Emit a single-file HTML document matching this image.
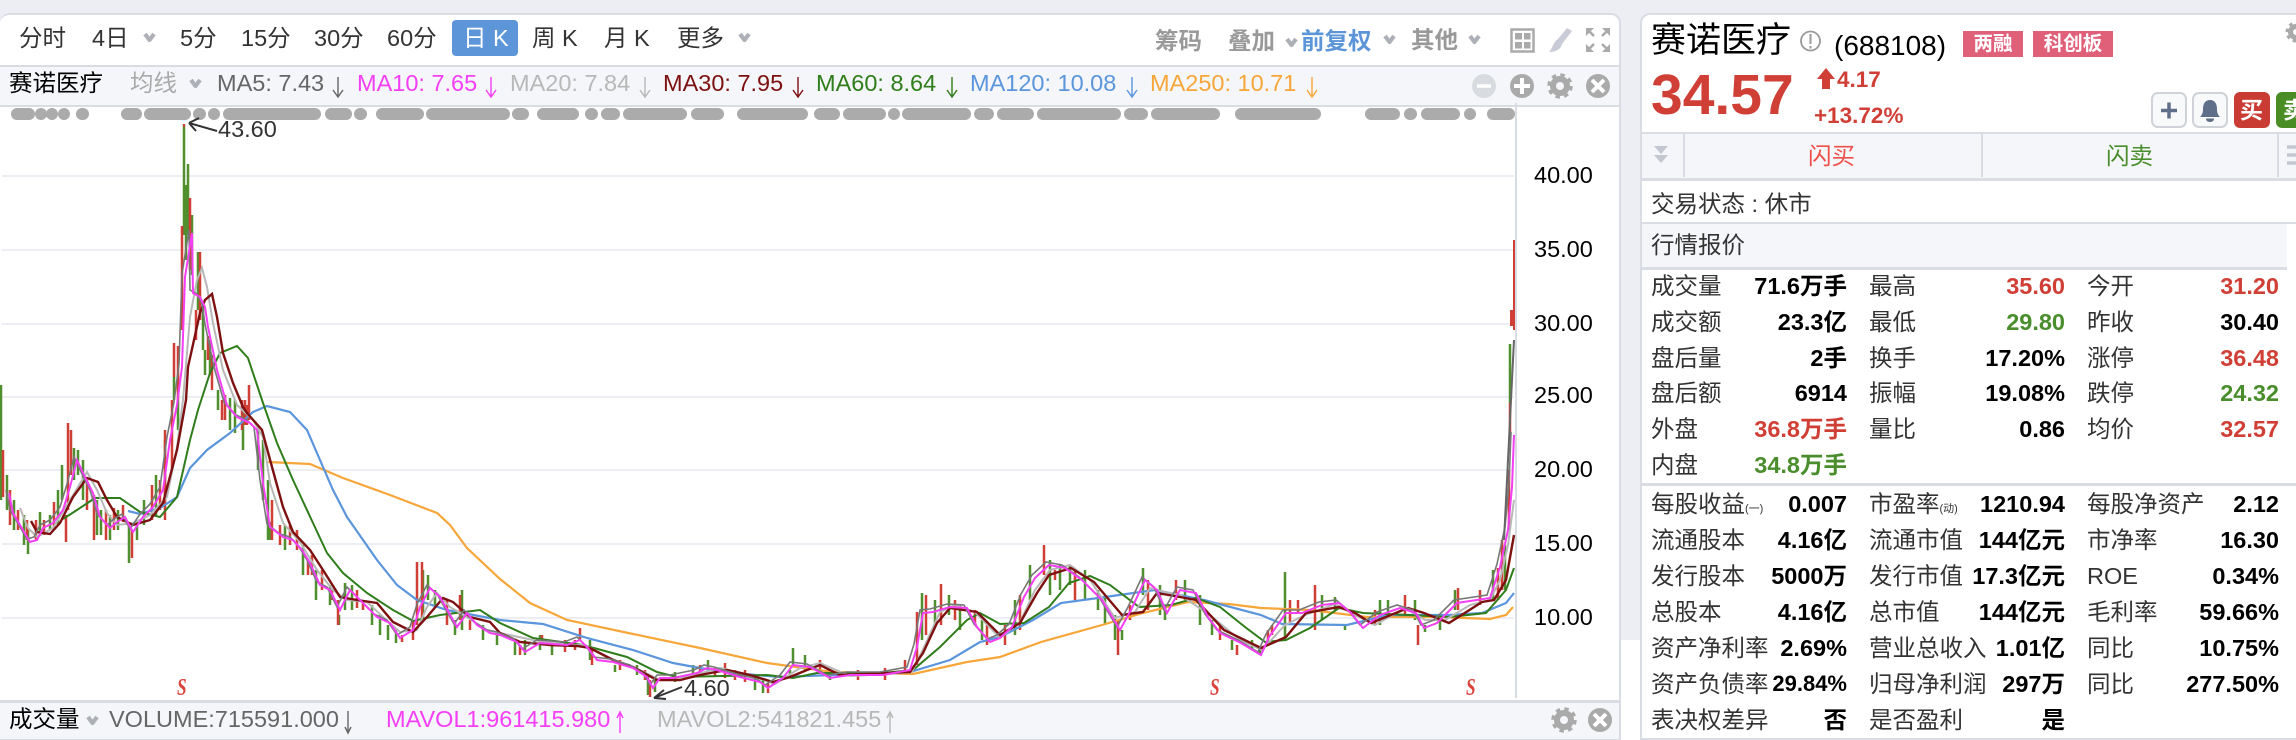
<!DOCTYPE html>
<html lang="zh"><head><meta charset="utf-8"><title>赛诺医疗</title>
<style>
html,body{margin:0;padding:0;background:#fff}
#p{position:relative;width:2296px;height:740px;overflow:hidden;background:#fff;font-family:"Liberation Sans","Noto Sans CJK SC",sans-serif;font-size:23.5px;color:#333}
.b{position:absolute}
.t{position:absolute;white-space:nowrap;height:36px;line-height:36px}
.r{text-align:right}
.v{font-weight:bold;color:#000;font-size:23.5px}
.red{color:#d03f36}.grn{color:#4a8d2c}
.l1{left:1651px}.l2{left:1869px}.l3{left:2087px}
.v1{right:449px}.v2{right:231px}.v3{right:17px}
svg{position:absolute;left:0;top:0}
</style></head><body><div id="p">
<!-- background -->
<div class="b" style="left:0;top:0;width:2296px;height:640px;background:#eceef3"></div>
<!-- left card -->
<div class="b" style="left:0;top:13px;width:1619px;height:725px;background:#fff;border:2px solid #d9dce3;border-left:0;border-bottom:0;border-radius:10px 10px 0 0"></div>
<div class="b" style="left:0;top:65px;width:1619px;height:38px;background:#f4f6f9;border-top:2px solid #d9dce3;border-bottom:2px solid #d9dce3"></div>
<div class="b" style="left:0;top:700px;width:1619px;height:36px;background:#f4f6f9;border-top:3px solid #d9dce3;border-bottom:2px solid #d9dce3"></div>
<!-- right card -->
<div class="b" style="left:1640px;top:13px;width:656px;height:727px;background:#fff;border-top:2px solid #d9dce3;border-left:2px solid #d9dce3;border-radius:10px 0 0 0;box-sizing:border-box"></div>
<div class="b" style="left:1642px;top:132px;width:654px;height:44px;background:#f4f6f9;border-top:2px solid #d9dce3;border-bottom:3px solid #d9dce3"></div>
<div class="b" style="left:1683px;top:134px;width:2px;height:43px;background:#d9dce3"></div>
<div class="b" style="left:1981px;top:134px;width:2px;height:43px;background:#d9dce3"></div>
<div class="b" style="left:2277px;top:134px;width:2px;height:43px;background:#d9dce3"></div>
<div class="b" style="left:1642px;top:222px;width:645px;height:43px;background:#f4f6f9;border-top:2px solid #d9dce3;border-bottom:3px solid #d9dce3"></div>
<div class="b" style="left:2287px;top:222px;width:9px;height:2px;background:#d9dce3"></div>
<div class="b" style="left:1642px;top:483px;width:654px;height:3px;background:#d9dce3"></div>
<div class="b" style="left:1642px;top:738px;width:654px;height:2px;background:#d9dce3"></div>
<div class="b" style="left:452px;top:20px;width:66px;height:36px;background:#5c95d8;border-radius:4px"></div>

<svg width="2296" height="740" viewBox="0 0 2296 740" fill="none">
<defs>
<polyline id="m10" points="9,493 13,513 20,525 30,542 37,540 43,528 53,523 63,510 70,487 77,460 85,477 93,493 100,517 110,528 117,522 125,517 133,532 143,517 153,507 163,490 170,440 177,405 182,367 185,277 192,233 193,293 200,297 205,307 208,327 217,370 227,405 237,417 250,423 257,430 263,483 270,527 283,537 293,540 302,550 310,563 320,585 330,590 340,610 350,590 363,603 377,617 390,623 400,638 413,630 420,607 430,588 440,597 457,627 467,613 477,625 490,633 500,635 517,642 525,652 540,643 567,645 580,640 588,648 597,660 613,662 633,668 647,677 653,688 660,678 673,678 697,673 707,668 717,670 740,677 760,682 768,688 783,678 793,665 810,667 830,678 850,675 883,675 910,670 917,647 923,613 933,612 950,607 967,608 977,627 990,642 1000,638 1012,627 1024,597 1035,578 1049,565 1065,568 1082,580 1102,600 1120,630 1131,610 1145,580 1157,590 1167,613 1180,590 1196,593 1208,617 1220,633 1241,643 1261,655 1269,637 1286,613 1302,613 1322,605 1339,603 1351,613 1363,628 1380,615 1400,608 1416,613 1424,628 1437,623 1457,603 1490,598 1500,567 1508,530 1512,487 1514,435"/>
</defs>
<!-- grid -->
<path stroke="#eceef3" stroke-width="2" d="M2 176H1514M2 250H1514M2 324H1514M2 397H1514M2 470H1514M2 544H1514M2 618H1514"/>
<path stroke="#d9dce3" stroke-width="2" d="M1516 103V698"/>
<!-- dots -->
<path stroke="#ababab" stroke-width="12" stroke-linecap="round" d="M17 114H29M41 114H41M52 114H52M64 114H64M82 114H83M127 114H136M150 114H185M199 114H200M214 114H214M229 114H315M331 114H346M360 114H361M382 114H418M432 114H504M518 114H523M543 114H573M591 114H592M607 114H614M629 114H681M697 114H718M743 114H802M820 114H834M849 114H880M894 114H894M908 114H965M980 114H988M1003 114H1028M1043 114H1115M1130 114H1142M1157 114H1214M1241 114H1315M1371 114H1394M1410 114H1411M1427 114H1454M1470 114H1470M1493 114H1509"/>
<!-- candles -->
<path stroke="#4f8f2e" stroke-width="2.5" d="M1 385V500M7 475V510M14 500V530M24 515V545M28 530V554M40 512V535M50 515V530M58 490V525M62 465V500M74 448V480M78 450V475M83 460V500M97 500V535M101 510V535M110 515V540M118 510V530M129 523V563M137 520V540M144 500V525M156 475V515M165 440V500M174 377V400M178 400V430M184 124V235M186 185V260M188 164V235M192 215V275M198 252V310M203 305V350M205 350V375M210 340V375M218 390V410M230 398V430M235 400V433M243 410V450M258 430V470M263 440V500M268 480V540M270 522V540M285 525V550M303 545V575M316 570V600M330 585V605M339 615V625M345 583V610M352 585V610M372 605V625M380 615V635M388 625V640M396 630V643M423 570V620M428 575V600M435 590V605M455 620V635M462 590V630M483 625V640M497 632V645M515 640V655M525 640V655M540 635V650M552 645V655M590 640V660M615 665V672M637 665V675M648 675V695M655 680V692M675 672V682M693 665V678M708 660V672M755 675V690M763 680V693M790 670V677M793 648V665M805 655V670M830 672V680M922 593V640M935 600V625M949 595V615M960 605V630M982 620V640M1015 600V635M1030 565V600M1050 560V595M1060 565V590M1070 565V585M1085 570V600M1098 590V610M1105 595V625M1115 615V640M1122 630V640M1143 568V595M1160 585V615M1165 610V620M1185 580V600M1200 595V625M1212 620V635M1232 640V650M1252 640V650M1260 650V655M1285 572V640M1322 595V620M1335 597V610M1345 625V630M1380 600V625M1388 600V615M1415 600V620M1425 625V632M1440 620V630M1455 590V610M1493 570V600M1505 545V590M1510 344V403"/>
<path stroke="#cf3f36" stroke-width="2.5" d="M3 450V497M10 490V525M18 510V530M27 520V540M36 520V540M44 520V535M54 502V530M66 515V542M68 423V510M71 430V475M87 480V510M94 495V540M106 510V540M114 508V530M123 505V522M132 530V558M152 485V520M160 480V510M165 430V520M172 400V470M174 343V377M178 346V400M182 226V330M190 198V270M196 310V340M200 252V320M208 336V360M212 355V390M222 400V420M225 395V420M242 400V430M245 400V425M247 405V425M249 385V420M272 500V540M280 525V545M290 525V545M297 530V550M308 560V575M312 555V575M322 570V590M332 590V600M338 600V625M357 590V608M363 600V610M402 635V642M413 620V640M417 562V625M422 562V620M447 600V625M460 595V620M470 620V630M520 645V655M542 635V645M565 640V652M575 640V650M580 628V640M592 650V665M620 660V670M645 670V680M650 680V697M700 665V676M715 668V676M725 663V678M735 670V680M745 670V682M768 683V693M820 660V672M858 670V680M885 668V680M905 660V672M917 612V665M926 595V635M941 584V625M955 600V620M975 610V625M987 625V645M1005 625V645M1020 595V630M1044 545V575M1055 570V580M1075 570V600M1118 620V655M1130 605V620M1148 580V610M1176 580V600M1220 625V640M1237 645V655M1268 630V640M1272 625V635M1290 600V625M1298 600V612M1315 585V630M1375 610V625M1405 595V615M1418 625V645M1458 588V610M1480 590V605M1498 568V600M1502 540V590M1509 470V530M1510 403V440"/>
<path stroke="#cf3f36" stroke-width="2" d="M1514 240V330"/><path stroke="#cf3f36" stroke-width="4" d="M1512 310V326"/><path stroke="#cf3f36" stroke-width="2" d="M184 124V127"/>
<!-- MAs -->
<polyline stroke="#f7a63a" stroke-width="2.2" points="268,462 310,464 343,478 390,495 437,513 450,525 467,548 500,579 530,603 567,620 633,634 700,648 767,663 833,672 913,674 967,662 1000,657 1041,642 1102,625 1143,613 1188,602 1229,604 1261,608 1310,610 1367,617 1441,617 1490,619 1506,615 1513,607"/>
<polyline stroke="#5b95dc" stroke-width="2.2" points="128,511 140,514 160,508 177,497 190,468 207,450 230,433 253,412 267,406 290,412 307,430 320,460 333,490 347,517 377,560 397,585 417,600 447,610 500,620 543,624 587,638 633,650 673,663 700,668 733,673 780,677 833,675 910,672 950,660 980,642 1000,637 1033,620 1061,603 1098,598 1155,590 1204,600 1261,615 1282,624 1347,625 1388,615 1449,615 1482,613 1506,603 1514,593"/>
<polyline stroke="#2f7d1b" stroke-width="2" points="63,519 77,510 95,498 120,498 140,512 160,517 177,497 190,440 198,410 210,373 220,353 237,346 248,358 263,403 277,443 293,480 313,523 327,553 343,573 367,593 393,610 413,621 440,615 480,610 500,623 533,638 583,645 627,657 657,672 677,677 767,675 793,678 817,673 883,673 913,670 940,647 967,620 980,613 1000,624 1024,623 1049,607 1069,583 1090,576 1110,585 1139,607 1171,605 1196,598 1220,607 1245,627 1265,642 1286,640 1310,628 1339,608 1363,613 1408,615 1449,617 1486,613 1506,590 1514,568"/>
<polyline stroke="#b8b8b8" stroke-width="2" points="20,508 28,528 37,537 53,528 70,500 87,472 97,490 107,513 117,525 133,523 150,515 167,497 177,447 183,400 190,317 197,280 202,268 207,287 213,323 223,370 237,405 253,420 263,437 270,483 283,523 300,542 317,570 333,590 347,600 367,602 383,617 400,632 417,630 427,607 437,593 450,607 467,617 487,630 500,633 533,640 567,645 585,645 610,658 640,670 660,680 690,676 720,668 750,675 775,684 800,668 820,663 850,676 890,674 912,672 925,645 940,612 955,605 975,612 1000,638 1020,622 1035,590 1050,570 1070,565 1090,580 1115,618 1135,612 1150,588 1165,592 1180,595 1210,615 1240,640 1262,650 1285,625 1305,615 1335,604 1355,615 1375,625 1405,608 1425,620 1445,620 1470,605 1490,600 1500,580 1508,545 1514,500"/>
<polyline stroke="#7d1010" stroke-width="2.4" points="31,521 37,532 50,534 60,523 73,497 87,478 98,482 107,500 117,517 133,525 150,520 163,503 177,450 186,400 188,367 200,313 205,300 212,294 217,317 223,353 233,383 243,407 247,413 262,430 272,467 283,507 293,532 310,550 323,570 340,597 357,600 377,603 393,622 413,632 427,617 443,598 453,602 470,617 490,622 500,633 520,642 550,645 577,646 590,648 613,660 633,667 657,680 680,680 700,675 727,670 750,675 773,682 790,677 807,670 820,665 840,675 867,674 910,672 923,653 937,623 950,608 977,612 1000,635 1020,623 1037,593 1049,575 1071,568 1094,582 1122,615 1143,612 1157,593 1180,597 1196,600 1224,630 1261,648 1286,637 1306,613 1339,607 1355,613 1371,623 1408,608 1424,613 1449,623 1482,602 1494,600 1506,580 1514,535"/>
<use href="#m10" stroke="#777" stroke-width="1.6" transform="translate(-3,-3)"/>
<polyline stroke="#666" stroke-width="2" points="1504,540 1509,440 1514,340"/>
<use href="#m10" stroke="#f43ff4" stroke-width="2"/>
<!-- hi lo arrows -->
<path stroke="#333" stroke-width="2" d="M189 123L217 131M189 123L199 118M189 123L196 131M654 698L682 687M654 698L664 690M654 698L666 699"/>
<!-- MA arrows -->
<g stroke-width="1.4">
<path stroke="#666" d="M338 77V96M333 90L338 97L343 90"/>
<path stroke="#f43ff4" d="M491 77V96M486 90L491 97L496 90"/>
<path stroke="#b8b8b8" d="M645 77V96M640 90L645 97L650 90"/>
<path stroke="#7d1010" d="M798 77V96M793 90L798 97L803 90"/>
<path stroke="#2f7d1b" d="M952 77V96M947 90L952 97L957 90"/>
<path stroke="#5b95dc" d="M1132 77V96M1127 90L1132 97L1137 90"/>
<path stroke="#f7a63a" d="M1312 77V96M1307 90L1312 97L1317 90"/>
<path stroke="#666" d="M348 711V732M345 727L348 733L351 727"/>
<path stroke="#f43ff4" d="M620 733V712M617 718L620 712L623 718"/>
<path stroke="#b8b8b8" d="M890 733V712M887 718L890 712L893 718"/>
</g>
<!-- chevrons -->
<g stroke="#adb0b6" stroke-width="4.2" stroke-linejoin="round">
<path d="M145 34L149.500 40L154 34"/><path d="M740 34L744.500 40L749 34"/><path d="M191 80L195.500 86L200 80"/>
<path d="M1287 39L1291.500 45L1296 39"/><path d="M1385 36L1389.500 42L1394 36"/><path d="M1470 36L1474.500 42L1479 36"/><path d="M88 717L92.500 723L97 717"/>
</g>
<!-- toolbar icons -->
<rect x="1511.500" y="29.500" width="22" height="22" stroke="#aaa" stroke-width="2.500"/>
<rect x="1515" y="33" width="7" height="6.500" fill="#aaa"/><rect x="1524" y="33" width="6.500" height="6.500" fill="#aaa"/><rect x="1515" y="42" width="7" height="6.500" fill="#aaa"/><rect x="1524" y="42" width="6.500" height="6.500" fill="#aaa"/>
<path fill="#c9cbd7" d="M1567 28L1572 31L1562 44C1561 49 1556 52 1549 52C1553 48 1553 42 1558 39Z"/>
<path stroke="#aaa" stroke-width="2.500" d="M1587 29L1594 36M1609 29L1602 36M1587 51L1594 44M1609 51L1602 44"/>
<path fill="#aaa" d="M1586 28H1594L1586 36ZM1610 28H1602L1610 36ZM1586 52H1594L1586 44ZM1610 52H1602L1610 44Z"/>
<!-- ma row icons -->
<circle cx="1484" cy="86" r="12" fill="#d8dbe0"/><path stroke="#fff" stroke-width="3.500" d="M1477 86H1491"/>
<circle cx="1522" cy="86" r="12" fill="#aaa"/><path stroke="#fff" stroke-width="4" d="M1514 86H1530M1522 78V94"/>
<circle cx="1560" cy="86" r="7" stroke="#aaa" stroke-width="6"/><circle cx="1560" cy="86" r="11" stroke="#aaa" stroke-width="3.500" stroke-dasharray="4.400 4.240"/>
<circle cx="1598" cy="86" r="12" fill="#aaa"/><path stroke="#fff" stroke-width="4" d="M1592 80L1604 92M1604 80L1592 92"/>
<!-- footer icons -->
<circle cx="1564" cy="720" r="7" stroke="#aaa" stroke-width="6"/><circle cx="1564" cy="720" r="11" stroke="#aaa" stroke-width="3.500" stroke-dasharray="4.400 4.240"/>
<circle cx="1600" cy="720" r="12" fill="#aaa"/><path stroke="#fff" stroke-width="4" d="M1594 714L1606 726M1606 714L1594 726"/>
<!-- right panel icons -->
<circle cx="1810.500" cy="41" r="9.500" stroke="#9a9a9a" stroke-width="1.800"/><path stroke="#9a9a9a" stroke-width="2" d="M1810.500 34V44M1810.500 46V48.500"/>
<path fill="#d03f36" d="M1826 68L1835 79H1830V89H1822V79H1817Z"/>
<rect x="2152" y="93" width="34" height="34" rx="6" fill="#f8f9fb" stroke="#cfd2d8" stroke-width="2"/>
<path stroke="#5f6f8a" stroke-width="3.500" d="M2161 110.500H2177M2169 102.500V118.500"/>
<rect x="2193" y="93" width="34" height="34" rx="6" fill="#f8f9fb" stroke="#cfd2d8" stroke-width="2"/>
<path fill="#5f6f8a" d="M2210 100C2215 100 2217 104 2217 109C2217 113 2218 115 2220 117H2200C2202 115 2203 113 2203 109C2203 104 2205 100 2210 100ZM2206 118.500H2214C2214 121 2212 122 2210 122C2208 122 2206 121 2206 118.500Z"/>
<rect x="2234" y="92" width="36" height="36" rx="6" fill="#c93c33"/>
<rect x="2276" y="92" width="36" height="36" rx="6" fill="#4a8d24"/>
<path fill="#c4c7d0" d="M1654 146H1668L1661 154ZM1654 155H1668L1661 163Z"/>
<path stroke="#c4c7d0" stroke-width="3.500" d="M2287 147H2296M2287 155H2296M2287 163H2296"/>
<circle cx="2296" cy="32" r="5.500" stroke="#aaa" stroke-width="5"/><circle cx="2296" cy="32" r="9" stroke="#aaa" stroke-width="3" stroke-dasharray="3.500 3.500"/>
<!-- S markers -->
<g fill="#d9443c" font-family="Liberation Serif,serif" font-size="24" font-style="italic" font-weight="bold">
<text transform="translate(177,695) scale(.72,1)">S</text>
<text transform="translate(1210,695) scale(.72,1)">S</text>
<text transform="translate(1466,695) scale(.72,1)">S</text>
</g>
</svg>

<!-- toolbar -->
<span class="t" style="left:19px;top:20px">分时</span><span class="t" style="left:92px;top:20px">4日</span>
<span class="t" style="left:180px;top:20px">5分</span><span class="t" style="left:241px;top:20px">15分</span>
<span class="t" style="left:314px;top:20px">30分</span><span class="t" style="left:387px;top:20px">60分</span>
<span class="t" style="left:463px;top:20px;color:#fff">日 K</span><span class="t" style="left:532px;top:20px">周 K</span>
<span class="t" style="left:604px;top:20px">月 K</span><span class="t" style="left:677px;top:20px">更多</span>
<span class="t" style="left:1155px;top:23px;color:#999;font-weight:bold">筹码</span><span class="t" style="left:1228px;top:23px;color:#999;font-weight:bold">叠加</span>
<span class="t" style="left:1301px;top:23px;color:#5c95d8;font-weight:bold">前复权</span><span class="t" style="left:1411px;top:22px;color:#999;font-weight:bold">其他</span>
<!-- ma row -->
<span class="t" style="left:9px;top:65px;color:#000">赛诺医疗</span><span class="t" style="left:130px;top:65px;color:#aaa">均线</span>
<span class="t" style="left:217px;top:65px;color:#666">MA5: 7.43</span>
<span class="t" style="left:357px;top:65px;color:#f43ff4">MA10: 7.65</span>
<span class="t" style="left:510px;top:65px;color:#b8b8b8">MA20: 7.84</span>
<span class="t" style="left:663px;top:65px;color:#7d1010">MA30: 7.95</span>
<span class="t" style="left:816px;top:65px;color:#2f7d1b">MA60: 8.64</span>
<span class="t" style="left:970px;top:65px;color:#5b95dc">MA120: 10.08</span>
<span class="t" style="left:1150px;top:65px;color:#f7a63a">MA250: 10.71</span>
<span class="t" style="left:218px;top:111px;color:#333">43.60</span><span class="t" style="left:684px;top:670px;color:#333">4.60</span>
<!-- axis -->
<span class="t" style="left:1534px;top:157px;color:#000">40.00</span><span class="t" style="left:1534px;top:231px;color:#000">35.00</span>
<span class="t" style="left:1534px;top:305px;color:#000">30.00</span><span class="t" style="left:1534px;top:377px;color:#000">25.00</span>
<span class="t" style="left:1534px;top:451px;color:#000">20.00</span><span class="t" style="left:1534px;top:525px;color:#000">15.00</span>
<span class="t" style="left:1534px;top:599px;color:#000">10.00</span>
<!-- footer -->
<span class="t" style="left:9px;top:701px;color:#000">成交量</span><span class="t" style="left:109px;top:701px;color:#666">VOLUME:715591.000</span>
<span class="t" style="left:386px;top:701px;color:#f43ff4">MAVOL1:961415.980</span><span class="t" style="left:657px;top:701px;color:#b8b8b8">MAVOL2:541821.455</span>
<!-- head -->
<span class="t" style="left:1651px;top:20px;font-size:35px;color:#000;height:42px;line-height:42px">赛诺医疗</span>
<span class="t" style="left:1834px;top:28px;font-size:28px;color:#000">(688108)</span>
<span class="b" style="left:1963px;top:31px;width:60px;height:26px;background:#e0607a;color:#fff;font-weight:bold;font-size:19.5px;line-height:26px;text-align:center">两融</span>
<span class="b" style="left:2033px;top:31px;width:80px;height:26px;background:#e0607a;color:#fff;font-weight:bold;font-size:19.5px;line-height:26px;text-align:center">科创板</span>
<span class="t red" style="left:1651px;top:62px;font-size:57px;font-weight:bold;height:66px;line-height:66px">34.57</span>
<span class="t red" style="left:1837px;top:62px;font-size:22.500px;font-weight:bold">4.17</span>
<span class="t red" style="left:1814px;top:98px;font-size:22.500px;font-weight:bold">+13.72%</span>
<span class="t" style="left:2240px;top:92px;color:#fff;font-weight:bold;font-size:23px">买</span>
<span class="t" style="left:2283px;top:92px;color:#fff;font-weight:bold;font-size:23px">卖</span>
<span class="t" style="left:1808px;top:138px;color:#ef4f4a">闪买</span><span class="t" style="left:2106px;top:138px;color:#4a8d2c">闪卖</span>
<span class="t l1" style="top:186px">交易状态 : 休市</span>
<span class="t l1" style="top:227px">行情报价</span>
<!-- rows A -->
<span class="t l1" style="top:268px">成交量</span><span class="t v r v1" style="top:268px">71.6万手</span><span class="t l2" style="top:268px">最高</span><span class="t v r v2" style="top:268px;color:#d03f36">35.60</span><span class="t l3" style="top:268px">今开</span><span class="t v r v3" style="top:268px;color:#d03f36">31.20</span>
<span class="t l1" style="top:304px">成交额</span><span class="t v r v1" style="top:304px">23.3亿</span><span class="t l2" style="top:304px">最低</span><span class="t v r v2" style="top:304px;color:#4a8d2c">29.80</span><span class="t l3" style="top:304px">昨收</span><span class="t v r v3" style="top:304px">30.40</span>
<span class="t l1" style="top:340px">盘后量</span><span class="t v r v1" style="top:340px">2手</span><span class="t l2" style="top:340px">换手</span><span class="t v r v2" style="top:340px">17.20%</span><span class="t l3" style="top:340px">涨停</span><span class="t v r v3" style="top:340px;color:#d03f36">36.48</span>
<span class="t l1" style="top:375px">盘后额</span><span class="t v r v1" style="top:375px">6914</span><span class="t l2" style="top:375px">振幅</span><span class="t v r v2" style="top:375px">19.08%</span><span class="t l3" style="top:375px">跌停</span><span class="t v r v3" style="top:375px;color:#4a8d2c">24.32</span>
<span class="t l1" style="top:411px">外盘</span><span class="t v r v1" style="top:411px;color:#d03f36">36.8万手</span><span class="t l2" style="top:411px">量比</span><span class="t v r v2" style="top:411px">0.86</span><span class="t l3" style="top:411px">均价</span><span class="t v r v3" style="top:411px;color:#d03f36">32.57</span>
<span class="t l1" style="top:447px">内盘</span><span class="t v r v1" style="top:447px;color:#4a8d2c">34.8万手</span>
<!-- rows B -->
<span class="t l1" style="top:486px">每股收益<span style="font-size:11px">(一)</span></span><span class="t v r v1" style="top:486px">0.007</span><span class="t l2" style="top:486px">市盈率<span style="font-size:11px">(动)</span></span><span class="t v r v2" style="top:486px">1210.94</span><span class="t l3" style="top:486px">每股净资产</span><span class="t v r v3" style="top:486px">2.12</span>
<span class="t l1" style="top:522px">流通股本</span><span class="t v r v1" style="top:522px">4.16亿</span><span class="t l2" style="top:522px">流通市值</span><span class="t v r v2" style="top:522px">144亿元</span><span class="t l3" style="top:522px">市净率</span><span class="t v r v3" style="top:522px">16.30</span>
<span class="t l1" style="top:558px">发行股本</span><span class="t v r v1" style="top:558px">5000万</span><span class="t l2" style="top:558px">发行市值</span><span class="t v r v2" style="top:558px">17.3亿元</span><span class="t l3" style="top:558px">ROE</span><span class="t v r v3" style="top:558px">0.34%</span>
<span class="t l1" style="top:594px">总股本</span><span class="t v r v1" style="top:594px">4.16亿</span><span class="t l2" style="top:594px">总市值</span><span class="t v r v2" style="top:594px">144亿元</span><span class="t l3" style="top:594px">毛利率</span><span class="t v r v3" style="top:594px">59.66%</span>
<span class="t l1" style="top:630px">资产净利率</span><span class="t v r v1" style="top:630px">2.69%</span><span class="t l2" style="top:630px">营业总收入</span><span class="t v r v2" style="top:630px">1.01亿</span><span class="t l3" style="top:630px">同比</span><span class="t v r v3" style="top:630px">10.75%</span>
<span class="t l1" style="top:666px">资产负债率</span><span class="t v r v1" style="top:666px;font-size:22px">29.84%</span><span class="t l2" style="top:666px">归母净利润</span><span class="t v r v2" style="top:666px">297万</span><span class="t l3" style="top:666px">同比</span><span class="t v r v3" style="top:666px">277.50%</span>
<span class="t l1" style="top:702px">表决权差异</span><span class="t v r v1" style="top:702px">否</span><span class="t l2" style="top:702px">是否盈利</span><span class="t v r v2" style="top:702px">是</span>
</div></body></html>
